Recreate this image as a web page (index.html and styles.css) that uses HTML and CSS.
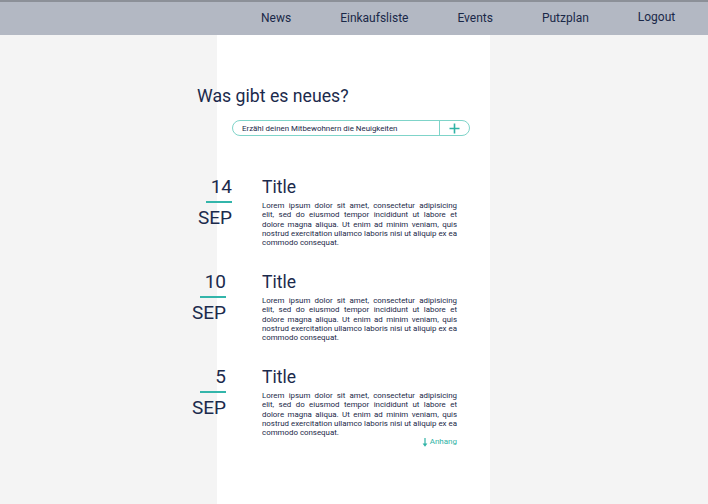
FILE: index.html
```html
<!DOCTYPE html>
<html lang="de">
<head>
<meta charset="utf-8">
<link rel="stylesheet" href="styles.css">
</head>
<body>
<header class="topbar">
  <nav class="nav">
    <a class="nav-item">News</a>
    <a class="nav-item">Einkaufsliste</a>
    <a class="nav-item">Events</a>
    <a class="nav-item">Putzplan</a>
    <a class="nav-item logout">Logout</a>
  </nav>
</header>
<main class="column">
  <div class="content">
    <h1 class="heading">Was gibt es neues?</h1>
    <form class="composer">
      <span class="composer-text">Erzähl deinen Mitbewohnern die Neuigkeiten</span>
      <span class="composer-btn">
        <svg width="11" height="11" viewBox="0 0 11 11"><path d="M5.5 0.5v10M0.5 5.5h10" stroke="#2fb3a6" stroke-width="1.6" fill="none"/></svg>
      </span>
    </form>
    <article class="entry">
      <div class="date date-wide"><span class="day">14</span><span class="rule"></span><span class="month">SEP</span></div>
      <div class="body">
        <h2 class="title">Title</h2>
        <p class="text">Lorem ipsum dolor sit amet, consectetur adipisicing elit, sed do eiusmod tempor incididunt ut labore et dolore magna aliqua. Ut enim ad minim veniam, quis nostrud exercitation ullamco laboris nisi ut aliquip ex ea commodo consequat.</p>
      </div>
    </article>
    <article class="entry">
      <div class="date"><span class="day">10</span><span class="rule"></span><span class="month">SEP</span></div>
      <div class="body">
        <h2 class="title">Title</h2>
        <p class="text">Lorem ipsum dolor sit amet, consectetur adipisicing elit, sed do eiusmod tempor incididunt ut labore et dolore magna aliqua. Ut enim ad minim veniam, quis nostrud exercitation ullamco laboris nisi ut aliquip ex ea commodo consequat.</p>
      </div>
    </article>
    <article class="entry">
      <div class="date"><span class="day">5</span><span class="rule"></span><span class="month">SEP</span></div>
      <div class="body">
        <h2 class="title">Title</h2>
        <p class="text">Lorem ipsum dolor sit amet, consectetur adipisicing elit, sed do eiusmod tempor incididunt ut labore et dolore magna aliqua. Ut enim ad minim veniam, quis nostrud exercitation ullamco laboris nisi ut aliquip ex ea commodo consequat.</p>
        <div class="attach">
          <svg width="6" height="9" viewBox="0 0 6 9"><path d="M3 0v7" stroke="#2fb3a6" stroke-width="1.2"/><path d="M0.6 5.4L3 8.8L5.4 5.4z" fill="#2fb3a6"/></svg>
          <span>Anhang</span>
        </div>
      </div>
    </article>
  </div>
</main>
</body>
</html>
```

FILE: styles.css
```css
html, body {
  margin: 0;
  padding: 0;
}
body {
  background: #f4f4f4;
  font-family: Roboto, "Liberation Sans", sans-serif;
  color: #1b2a4c;
  height: 504px;
  overflow: hidden;
}
.topbar {
  height: 33px;
  background: #b3b8c3;
  border-top: 2px solid #8c9098;
  display: flex;
}
.nav {
  display: flex;
  margin-left: 261px;
  align-items: center;
  height: 31px;
}
.nav-item {
  font-size: 12px;
  color: #1a2848;
  text-decoration: none;
  margin-right: 49px;
  padding-top: 1px;
}
.nav-item.logout {
  margin-right: 0;
  padding-top: 0;
  padding-bottom: 2px;
}
.column {
  margin-left: 217px;
  width: 273px;
  background: #ffffff;
  height: 469px;
}
.content {
  margin-left: -24px;
  padding-top: 50px;
}
.heading {
  margin: 0 0 0 4px;
  font-weight: 400;
  font-size: 17.7px;
  line-height: 22px;
  color: #1b2a4c;
}
.composer {
  margin: 13px 0 0 39px;
  width: 238px;
  height: 16px;
  box-sizing: border-box;
  border: 1px solid #7fd4c9;
  border-radius: 8px;
  display: flex;
  align-items: center;
}
.composer-text {
  flex: 1;
  font-size: 7.9px;
  padding-left: 9px;
  color: #1a2848;
}
.composer-btn {
  width: 29px;
  height: 14px;
  border-left: 1px solid #7fd4c9;
  display: flex;
  align-items: center;
  justify-content: center;
}
.entry {
  display: flex;
  margin-top: 40px;
}
.entry + .entry {
  margin-top: 23.5px;
}
.date {
  width: 33px;
  display: flex;
  flex-direction: column;
  align-items: flex-end;
}
.date-wide {
  width: 39px;
}
.day {
  font-size: 19px;
  line-height: 22px;
}
.rule {
  width: 26px;
  height: 2px;
  background: #33b5aa;
  margin: 3px 0 4px;
}
.month {
  font-size: 19px;
  line-height: 22px;
}
.body {
  margin-left: 36px;
  width: 195px;
}
.date-wide + .body {
  margin-left: 30px;
}
.title {
  margin: 0;
  font-weight: 400;
  font-size: 17.5px;
  line-height: 22px;
  color: #1b2a4c;
}
.text {
  margin: 3px 0 0;
  font-size: 7.9px;
  line-height: 9.3px;
  text-align: justify;
  color: #1a2848;
}
.attach {
  display: flex;
  justify-content: flex-end;
  align-items: center;
  gap: 2px;
  margin-top: 0;
  font-size: 8px;
  line-height: 10px;
  color: #2fb3a6;
}
```
